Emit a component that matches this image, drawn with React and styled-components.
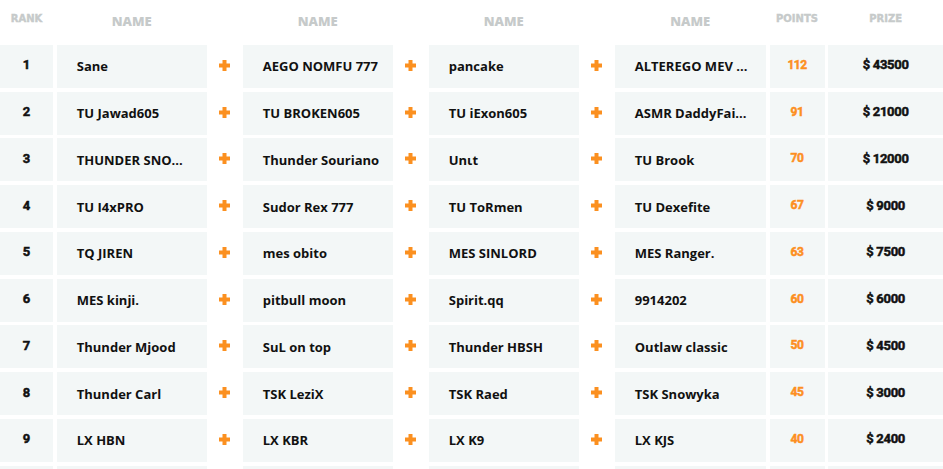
import styled, { createGlobalStyle } from "styled-components";

const GlobalStyle = createGlobalStyle`
  html, body {
    margin: 0;
    padding: 0;
    background: #ffffff;
  }
  body {
    font-family: "Open Sans", "Liberation Sans", sans-serif;
    overflow: hidden;
  }
`;

// 순위 데이터
const rows = [
  { rank: 1, team: ["Sane", "AEGO NOMFU 777", "pancake", "ALTEREGO MEV ..."], points: 112, prize: 43500 },
  { rank: 2, team: ["TU Jawad605", "TU BROKEN605", "TU iExon605", "ASMR DaddyFai..."], points: 91, prize: 21000 },
  { rank: 3, team: ["THUNDER SNO...", "Thunder Souriano", "Unιt", "TU Brook"], points: 70, prize: 12000 },
  { rank: 4, team: ["TU I4xPRO", "Sudor Rex 777", "TU ToRmen", "TU Dexefite"], points: 67, prize: 9000 },
  { rank: 5, team: ["TQ JIREN", "mes obito", "MES SINLORD", "MES Ranger."], points: 63, prize: 7500 },
  { rank: 6, team: ["MES kinji.", "pitbull moon", "Spirit.qq", "9914202"], points: 60, prize: 6000 },
  { rank: 7, team: ["Thunder Mjood", "SuL on top", "Thunder HBSH", "Outlaw classic"], points: 50, prize: 4500 },
  { rank: 8, team: ["Thunder Carl", "TSK LeziX", "TSK Raed", "TSK Snowyka"], points: 45, prize: 3000 },
  { rank: 9, team: ["LX HBN", "LX KBR", "LX K9", "LX KJS"], points: 40, prize: 2400 },
];

const PlusIcon = () => (
  <svg width="11" height="11" viewBox="0 0 11 11">
    <rect x="3.5" y="0" width="4" height="11" fill="#fb9020" />
    <rect x="0" y="3.5" width="11" height="4" fill="#fb9020" />
  </svg>
);

const App = () => {
  return (
    <>
      <GlobalStyle />
      <Board>
        <Row>
          <SmallHead>RANK</SmallHead>
          <NameHead>NAME</NameHead>
          <Spacer />
          <NameHead>NAME</NameHead>
          <Spacer />
          <NameHead>NAME</NameHead>
          <Spacer />
          <NameHead>NAME</NameHead>
          <SmallHead>POINTS</SmallHead>
          <SmallHead>PRIZE</SmallHead>
        </Row>
        {rows.map((row) => (
          <Row key={row.rank} $body>
            <RankCell>{row.rank}</RankCell>
            {row.team.map((player, i) => (
              <PlayerGroup key={player}>
                <NameCell>{player}</NameCell>
                {i < row.team.length - 1 && (
                  <PlusCell>
                    <PlusIcon />
                  </PlusCell>
                )}
              </PlayerGroup>
            ))}
            <PointsCell>{row.points}</PointsCell>
            <PrizeCell>$ {row.prize}</PrizeCell>
          </Row>
        ))}
        {/* 다음 줄 (화면 아래에서 잘림) */}
        <Row $body>
          <RankCell />
          <NameCell />
          <Spacer />
          <NameCell />
          <Spacer />
          <NameCell />
          <Spacer />
          <NameCell />
          <PointsCell />
          <PrizeCell />
        </Row>
      </Board>
    </>
  );
};

const Board = styled.div`
  display: flex;
  flex-direction: column;
  gap: 3.75px;
  width: 943px;
`;

const Row = styled.div`
  display: grid;
  grid-template-columns: 53px 150px 28.5px 150px 28.5px 150px 28.5px 151px 55px 1fr;
  column-gap: 3.75px;
  height: ${(props) => (props.$body ? "43px" : "41px")};
  flex-shrink: 0;
`;

const PlayerGroup = styled.div`
  display: contents;
`;

const HeadCell = styled.div`
  display: flex;
  align-items: center;
  justify-content: center;
  color: #c6caca;
`;

const SmallHead = styled(HeadCell)`
  font-family: "DejaVu Sans", sans-serif;
  font-weight: 700;
  font-size: 10px;
  padding-bottom: 5px;
  -webkit-text-stroke: 0.4px #c6caca;
`;

const NameHead = styled(HeadCell)`
  font-family: "Open Sans", sans-serif;
  font-weight: 800;
  font-size: 13px;
`;

const Spacer = styled.div``;

const Cell = styled.div`
  display: flex;
  align-items: center;
  background-color: #f3f7f7;
  color: #111111;
  min-width: 0;
`;

const NumberCell = styled(Cell)`
  justify-content: center;
  font-family: "Roboto", "Liberation Sans", sans-serif;
  font-weight: 700;
  padding-bottom: 3px;
  -webkit-text-stroke: 0.5px currentColor;
`;

const RankCell = styled(NumberCell)`
  font-size: 13px;
`;

const NameCell = styled(Cell)`
  padding: 0 16px 0 20px;
  font-family: "Open Sans", sans-serif;
  font-weight: 700;
  font-size: 13px;
  white-space: nowrap;
  overflow: hidden;
  text-overflow: ellipsis;
`;

const PlusCell = styled.div`
  display: flex;
  align-items: center;
  justify-content: center;
  padding-bottom: 2px;
`;

const PointsCell = styled(NumberCell)`
  font-size: 12px;
  letter-spacing: -0.5px;
  color: #fd8f1f;
`;

const PrizeCell = styled(NumberCell)`
  font-size: 13px;
  letter-spacing: -0.3px;
`;

export default App;
